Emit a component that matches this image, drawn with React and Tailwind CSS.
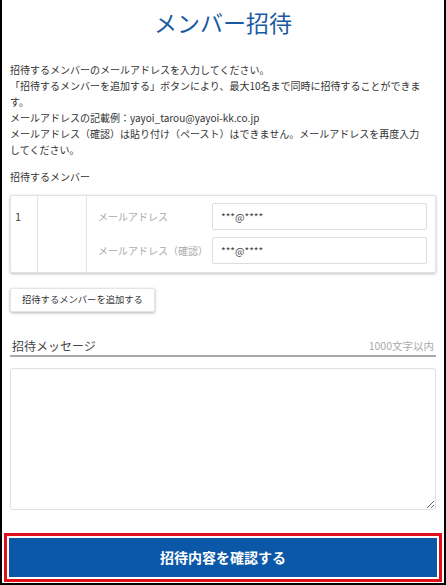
import React from 'react';

const jp = { fontFamily: '"Noto Sans CJK JP", "Noto Sans", sans-serif' };

function MemberRow({ no }) {
    return (
        <div className="flex border border-[#e3e3e3] rounded-[2px] shadow-[0_1px_3px_rgba(0,0,0,0.25)] bg-white">
            <div className="w-[27px] pl-[4px] pt-[12px] text-[11px] text-[#444] border-r border-[#e3e3e3]">{no}</div>
            <div className="w-[49px] border-r border-[#e3e3e3]"></div>
            <div className="flex-1 flex flex-col gap-[7px] pt-[7px] pb-[8px] pr-[8px]">
                <div className="flex items-center">
                    <div className="w-[125px] pl-[11px] text-[10px] text-[#aaa]">メールアドレス</div>
                    <div className="flex-1 h-[27px] border border-[#ddd] rounded-[2px] flex items-center pl-[8px] text-[10px] text-[#444]">***@****</div>
                </div>
                <div className="flex items-center">
                    <div className="w-[125px] pl-[11px] text-[10px] text-[#aaa]">メールアドレス（確認）</div>
                    <div className="flex-1 h-[27px] border border-[#ddd] rounded-[2px] flex items-center pl-[8px] text-[10px] text-[#444]">***@****</div>
                </div>
            </div>
        </div>
    );
}

function App() {
    return (
        <div style={jp} className="w-[446px] h-[585px] bg-white border-l-2 border-r-2 border-b-2 border-black flex flex-col">
            <h1 className="text-center text-[23px] leading-[30px] text-[#1b5aa2] mt-[7px]">メンバー招待</h1>

            <div className="px-[8px] mt-[25px] text-[10px] leading-[16px] text-[#333] pr-[16px]">
                <p>招待するメンバーのメールアドレスを入力してください。</p>
                <p>「招待するメンバーを追加する」ボタンにより、最大10名まで同時に招待することができます。</p>
                <p>メールアドレスの記載例：yayoi_tarou@yayoi-kk.co.jp</p>
                <p>メールアドレス（確認）は貼り付け（ペースト）はできません。メールアドレスを再度入力してください。</p>
            </div>

            <div className="px-[8px] mt-[11px]">
                <div className="text-[10px] text-[#333] mb-[11px]">招待するメンバー</div>
                <MemberRow no="1" />
                <button className="mt-[15px] h-[24px] px-[11px] text-[9.3px] text-[#333] bg-white border border-[#e5e5e5] shadow-[0_1px_3px_rgba(0,0,0,0.3)] rounded-[2px]">
                    招待するメンバーを追加する
                </button>
            </div>

            <div className="px-[8px] mt-[27px]">
                <div className="flex items-end justify-between border-b-2 border-[#a8a8a8] pb-[2px] px-[2px] leading-[14px]">
                    <span className="text-[12px] text-[#444]">招待メッセージ</span>
                    <span className="text-[10.5px] text-[#aaa]">1000文字以内</span>
                </div>
                <textarea className="mt-[11px] w-full h-[142px] border border-[#e0e0e0] rounded-[3px] block resize-y"></textarea>
            </div>

            <div className="mt-auto mx-[2px] mb-[1px] border-[3px] border-[#e0101a] p-[1px]">
                <button className="w-full h-[41px] bg-[#0b58a8] text-white text-[14px] font-bold border border-white">
                    招待内容を確認する
                </button>
            </div>
        </div>
    );
}

export default App;
